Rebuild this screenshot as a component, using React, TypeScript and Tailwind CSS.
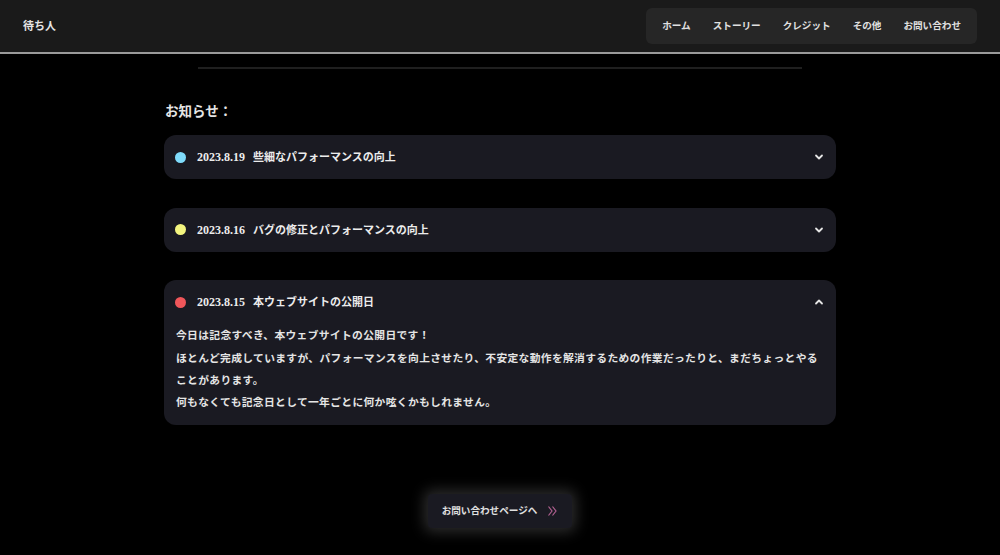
import React, { useState } from "react";

const font = "font-['Liberation_Serif','Noto_Sans_CJK_JP',serif]";

interface NewsItem {
  date: string;
  title: string;
  dot: string;
  body?: string[];
}

const news: NewsItem[] = [
  { date: "2023.8.19", title: "些細なパフォーマンスの向上", dot: "bg-[#7fdbfb]" },
  { date: "2023.8.16", title: "バグの修正とパフォーマンスの向上", dot: "bg-[#f3f57f]" },
  {
    date: "2023.8.15",
    title: "本ウェブサイトの公開日",
    dot: "bg-[#f0565a]",
    body: [
      "今日は記念すべき、本ウェブサイトの公開日です！",
      "ほとんど完成していますが、パフォーマンスを向上させたり、不安定な動作を解消するための作業だったりと、まだちょっとやることがあります。",
      "何もなくても記念日として一年ごとに何か呟くかもしれません。",
    ],
  },
];

const Chevron: React.FC<{ up?: boolean }> = ({ up }) => (
  <svg width="10" height="10" viewBox="0 0 10 10" className={up ? "rotate-180" : ""}>
    <path d="M2 3.5 L5 6.5 L8 3.5" fill="none" stroke="#e5e5e5" strokeWidth="1.8" strokeLinecap="round" strokeLinejoin="round" />
  </svg>
);

const Header: React.FC = () => (
  <header className="h-[54px] bg-[#1a1a1a] border-b-2 border-[#9a9a9a] flex items-center justify-between pl-[23px] pr-[23px]">
    <span className="text-[11px] font-bold text-[#e5e5e5]">待ち人</span>
    <nav className="h-9 bg-[#262626] rounded-md flex items-center gap-[22px] px-[16px] text-[9.6px] font-bold text-[#e0e0e0]">
      <a href="#">ホーム</a>
      <a href="#">ストーリー</a>
      <a href="#">クレジット</a>
      <a href="#">その他</a>
      <a href="#">お問い合わせ</a>
    </nav>
  </header>
);

const Accordion: React.FC<{ item: NewsItem; defaultOpen?: boolean }> = ({ item, defaultOpen }) => {
  const [open, setOpen] = useState(!!defaultOpen);
  return (
    <div className="bg-[#1a1a22] rounded-xl">
      <button
        onClick={() => setOpen(!open)}
        className="w-full h-11 flex items-center px-[11px] text-left"
      >
        <span className={`w-[11px] h-[11px] rounded-full ${item.dot}`} />
        <span className="ml-[11px] text-[12px] font-bold text-[#ececec]">{item.date}</span>
        <span className="ml-[8px] text-[11px] font-bold text-[#ececec] flex-1">{item.title}</span>
        <span className="mr-[1px]">
          <Chevron up={open} />
        </span>
      </button>
      {open && item.body && (
        <div className="px-[12px] pb-[12px] text-[10.75px] tracking-[0.35px] font-bold text-[#e5e5e5] leading-[22.3px]">
          {item.body.map((line, i) => (
            <p key={i}>{line}</p>
          ))}
        </div>
      )}
    </div>
  );
};

export default function App() {
  return (
    <div className={`min-h-[555px] bg-black ${font}`}>
      <Header />
      <main className="flex flex-col items-center">
        <div className="w-[604px] h-[2px] bg-[#1f1f1f] mt-[13px]" />
        <section className="w-[672px] mt-[33px]">
          <h2 className="text-[13.5px] font-bold text-[#e5e5e5] pl-[1px]">お知らせ：</h2>
          <div className="mt-[13px] flex flex-col gap-[28.5px]">
            {news.map((n, i) => (
              <Accordion key={n.date} item={n} defaultOpen={i === 2} />
            ))}
          </div>
        </section>
        <a
          href="#"
          className="mt-[69px] w-[144px] h-[34px] bg-[#1a1a22] rounded-sm flex items-center justify-center gap-[10px] shadow-[0_0_14px_4px_rgba(80,80,80,0.55)] text-[9.6px] font-bold text-[#e0e0e0]"
        >
          <span>お問い合わせページへ</span>
          <svg width="11" height="12" viewBox="0 0 11 12">
            <path d="M1.5 1.5 L5 6 L1.5 10.5 M5.5 1.5 L9 6 L5.5 10.5" fill="none" stroke="#b0608f" strokeWidth="1.2" />
          </svg>
        </a>
      </main>
    </div>
  );
}
